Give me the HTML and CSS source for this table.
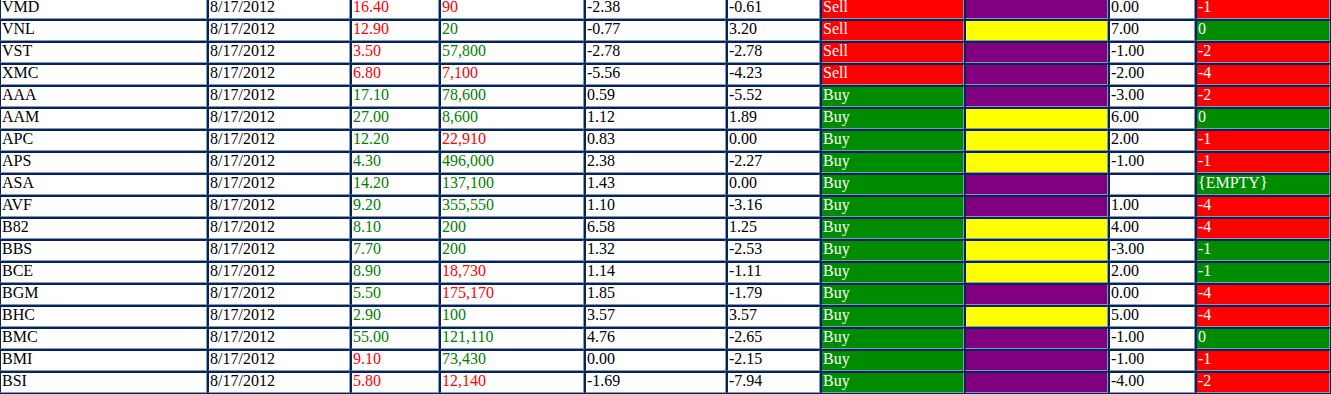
FILE: index.html
```html
<!DOCTYPE html>
<html>
<head>
<meta charset="utf-8">
<link rel="stylesheet" href="styles.css">
</head>
<body>
<table class="grid">
<colgroup>
<col class="c1"><col class="c2"><col class="c3"><col class="c4"><col class="c5"><col class="c6"><col class="c7"><col class="c8"><col class="c9"><col class="c10">
</colgroup>
<tbody>
<tr><td>VMD</td><td>8/17/2012</td><td class="r">16.40</td><td class="r">90</td><td>-2.38</td><td>-0.61</td><td class="bred">Sell</td><td class="bpur"></td><td>0.00</td><td class="bred">-1</td></tr>
<tr><td>VNL</td><td>8/17/2012</td><td class="r">12.90</td><td class="g">20</td><td>-0.77</td><td>3.20</td><td class="bred">Sell</td><td class="byel"></td><td>7.00</td><td class="bgrn">0</td></tr>
<tr><td>VST</td><td>8/17/2012</td><td class="r">3.50</td><td class="g">57,800</td><td>-2.78</td><td>-2.78</td><td class="bred">Sell</td><td class="bpur"></td><td>-1.00</td><td class="bred">-2</td></tr>
<tr><td>XMC</td><td>8/17/2012</td><td class="r">6.80</td><td class="r">7,100</td><td>-5.56</td><td>-4.23</td><td class="bred">Sell</td><td class="bpur"></td><td>-2.00</td><td class="bred">-4</td></tr>
<tr><td>AAA</td><td>8/17/2012</td><td class="g">17.10</td><td class="g">78,600</td><td>0.59</td><td>-5.52</td><td class="bgrn">Buy</td><td class="bpur"></td><td>-3.00</td><td class="bred">-2</td></tr>
<tr><td>AAM</td><td>8/17/2012</td><td class="g">27.00</td><td class="g">8,600</td><td>1.12</td><td>1.89</td><td class="bgrn">Buy</td><td class="byel"></td><td>6.00</td><td class="bgrn">0</td></tr>
<tr><td>APC</td><td>8/17/2012</td><td class="g">12.20</td><td class="r">22,910</td><td>0.83</td><td>0.00</td><td class="bgrn">Buy</td><td class="byel"></td><td>2.00</td><td class="bred">-1</td></tr>
<tr><td>APS</td><td>8/17/2012</td><td class="g">4.30</td><td class="g">496,000</td><td>2.38</td><td>-2.27</td><td class="bgrn">Buy</td><td class="byel"></td><td>-1.00</td><td class="bred">-1</td></tr>
<tr><td>ASA</td><td>8/17/2012</td><td class="g">14.20</td><td class="g">137,100</td><td>1.43</td><td>0.00</td><td class="bgrn">Buy</td><td class="bpur"></td><td></td><td class="bgrn">{EMPTY}</td></tr>
<tr><td>AVF</td><td>8/17/2012</td><td class="g">9.20</td><td class="g">355,550</td><td>1.10</td><td>-3.16</td><td class="bgrn">Buy</td><td class="bpur"></td><td>1.00</td><td class="bred">-4</td></tr>
<tr><td>B82</td><td>8/17/2012</td><td class="g">8.10</td><td class="g">200</td><td>6.58</td><td>1.25</td><td class="bgrn">Buy</td><td class="byel"></td><td>4.00</td><td class="bred">-4</td></tr>
<tr><td>BBS</td><td>8/17/2012</td><td class="g">7.70</td><td class="g">200</td><td>1.32</td><td>-2.53</td><td class="bgrn">Buy</td><td class="byel"></td><td>-3.00</td><td class="bgrn">-1</td></tr>
<tr><td>BCE</td><td>8/17/2012</td><td class="g">8.90</td><td class="r">18,730</td><td>1.14</td><td>-1.11</td><td class="bgrn">Buy</td><td class="byel"></td><td>2.00</td><td class="bgrn">-1</td></tr>
<tr><td>BGM</td><td>8/17/2012</td><td class="g">5.50</td><td class="r">175,170</td><td>1.85</td><td>-1.79</td><td class="bgrn">Buy</td><td class="bpur"></td><td>0.00</td><td class="bred">-4</td></tr>
<tr><td>BHC</td><td>8/17/2012</td><td class="g">2.90</td><td class="g">100</td><td>3.57</td><td>3.57</td><td class="bgrn">Buy</td><td class="byel"></td><td>5.00</td><td class="bred">-4</td></tr>
<tr><td>BMC</td><td>8/17/2012</td><td class="g">55.00</td><td class="g">121,110</td><td>4.76</td><td>-2.65</td><td class="bgrn">Buy</td><td class="bpur"></td><td>-1.00</td><td class="bgrn">0</td></tr>
<tr><td>BMI</td><td>8/17/2012</td><td class="r">9.10</td><td class="g">73,430</td><td>0.00</td><td>-2.15</td><td class="bgrn">Buy</td><td class="bpur"></td><td>-1.00</td><td class="bred">-1</td></tr>
<tr><td>BSI</td><td>8/17/2012</td><td class="r">5.80</td><td class="r">12,140</td><td>-1.69</td><td>-7.94</td><td class="bgrn">Buy</td><td class="bpur"></td><td>-4.00</td><td class="bred">-2</td></tr>
</tbody>
</table>
</body>
</html>
```

FILE: styles.css
```css
html, body {
  margin: 0;
  padding: 0;
  background: #ffffff;
  overflow: hidden;
}
.grid {
  margin: -3px 0 0 -1px;
  table-layout: fixed;
  width: 1332px;
  border-collapse: separate;
  border-spacing: 1px;
  background: #0a2355;
  font-family: "Liberation Serif", "Times New Roman", serif;
  font-size: 16px;
  color: #000000;
}
.grid td {
  background: #ffffff;
  height: 16px;
  line-height: 16px;
  padding: 0 0 3px 1px;
  border-style: solid;
  border-width: 1px;
  border-color: #0a2355 #7d9bc6 #7d9bc6 #0a2355;
  white-space: nowrap;
  overflow: hidden;
  vertical-align: top;
}
.c1 { width: 207px; }
.c2 { width: 142px; }
.c3 { width: 88px; }
.c4 { width: 144px; }
.c5 { width: 141px; }
.c6 { width: 93px; }
.c7 { width: 143px; }
.c8 { width: 143px; }
.c9 { width: 86px; }
.c10 { width: 134px; }
.grid td.r { color: #ff0000; }
.grid td.g { color: #008000; }
.grid td.bred { background: #ff0000; color: #ffffff; }
.grid td.bgrn { background: #008c00; color: #ffffff; }
.grid td.bpur { background: #800080; }
.grid td.byel { background: #ffff00; }
```
